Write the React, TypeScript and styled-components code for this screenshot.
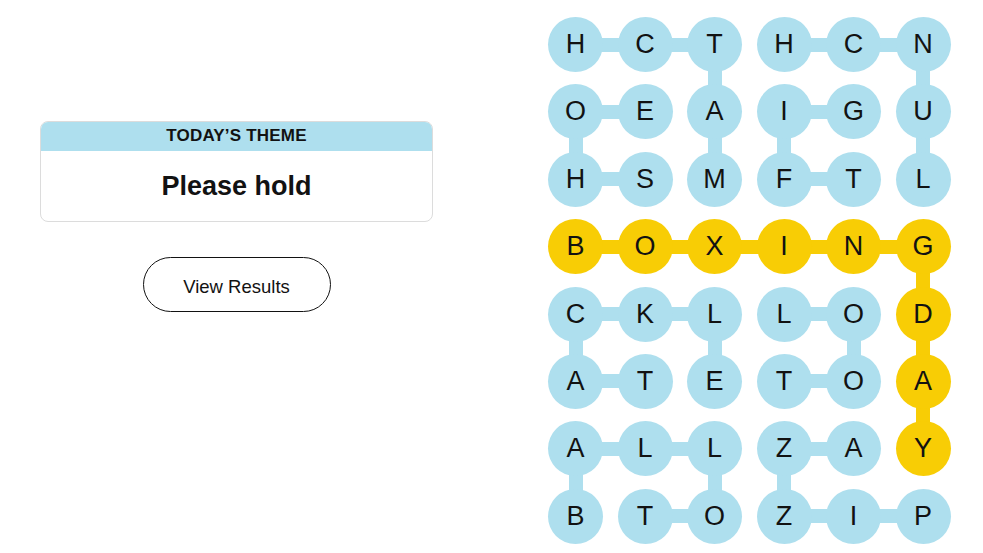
import React from "react";
import styled, { createGlobalStyle } from "styled-components";

const GlobalStyle = createGlobalStyle`
  html, body {
    margin: 0;
    padding: 0;
    background: #ffffff;
    font-family: "Liberation Sans", Arial, sans-serif;
    color: #000;
  }
`;

const BLUE = "#aedfee";
const YELLOW = "#f8cd05";
const CELL = 55;
const COL_GAP = 14.5;
const ROW_GAP = 12.4;

const Page = styled.div`
  display: flex;
  align-items: flex-start;
  width: 983px;
  height: 553px;
  overflow: hidden;
`;

const Side = styled.div`
  display: flex;
  flex-direction: column;
  align-items: center;
  width: 393px;
  padding: 121px 0 0 40px;
`;

const ThemeCard = styled.section`
  width: 100%;
  box-sizing: border-box;
  border: 1px solid #dcdcdc;
  border-radius: 8px;
  overflow: hidden;
  background: #fff;
`;

const ThemeHeader = styled.div`
  height: 30px;
  background: ${BLUE};
  display: flex;
  align-items: center;
  justify-content: center;
  font-weight: 700;
  font-size: 17px;
  letter-spacing: 0.2px;
  color: #121212;
  margin: -1px -1px 0;
`;

const ThemeBody = styled.div`
  height: 70px;
  display: flex;
  align-items: center;
  justify-content: center;
  font-weight: 700;
  font-size: 27px;
  color: #121212;
`;

const ResultsButton = styled.button`
  margin-top: 35px;
  width: 188px;
  height: 55px;
  padding: 4px 0 0;
  border: 1px solid #121212;
  border-radius: 28px;
  background: #fff;
  font-family: "Liberation Sans", Arial, sans-serif;
  font-size: 18.5px;
  color: #121212;
  cursor: pointer;
`;

const Board = styled.div`
  margin-left: 115px;
  padding-top: 17px;
  display: grid;
  grid-template-columns: repeat(6, ${CELL}px);
  grid-auto-rows: ${CELL}px;
  column-gap: ${COL_GAP}px;
  row-gap: ${ROW_GAP}px;
`;

const Cell = styled.div`
  position: relative;
  width: ${CELL}px;
  height: ${CELL}px;
`;

const Circle = styled.div<{ $color: string }>`
  position: relative;
  z-index: 2;
  width: 100%;
  height: 100%;
  border-radius: 50%;
  background: ${(p) => p.$color};
  display: flex;
  align-items: center;
  justify-content: center;
  font-size: 27px;
  font-weight: 400;
  color: #121212;
  line-height: 1;
`;

const Link = styled.span<{ $dir: "right" | "down"; $color: string }>`
  position: absolute;
  z-index: 1;
  background: ${(p) => p.$color};
  ${(p) =>
    p.$dir === "right"
      ? `left: 50%; top: calc(50% - 7px); height: 14px; width: ${CELL + COL_GAP}px;`
      : `top: 50%; left: calc(50% - 7px); width: 14px; height: ${CELL + ROW_GAP}px;`}
`;

const letters = [
  "HCTHCN",
  "OEAIGU",
  "HSMFTL",
  "BOXING",
  "CKLLOD",
  "ATETOA",
  "ALLZAY",
  "BTOZIP",
];

const rightLinks = new Set([
  "0,0", "0,1", "0,3", "0,4",
  "1,0", "1,3",
  "2,0", "2,3",
  "3,0", "3,1", "3,2", "3,3", "3,4",
  "4,0", "4,1", "4,3",
  "5,0", "5,3",
  "6,0", "6,1", "6,3",
  "7,1", "7,3", "7,4",
]);
const downLinks = new Set([
  "0,2", "0,5",
  "1,0", "1,2", "1,3", "1,5",
  "3,5", "4,5", "5,5",
  "4,0", "4,2", "4,4",
  "6,0", "6,2", "6,3",
]);

const isYellow = (r: number, c: number) =>
  r === 3 || (c === 5 && r >= 3 && r <= 6);

export default function App() {
  return (
    <>
      <GlobalStyle />
      <Page>
        <Side>
          <ThemeCard>
            <ThemeHeader>TODAY’S THEME</ThemeHeader>
            <ThemeBody>Please hold</ThemeBody>
          </ThemeCard>
          <ResultsButton>View Results</ResultsButton>
        </Side>
        <Board>
          {letters.map((row, r) =>
            row.split("").map((ch, c) => {
              const key = `${r},${c}`;
              const col = isYellow(r, c) ? YELLOW : BLUE;
              return (
                <Cell key={key}>
                  {rightLinks.has(key) && <Link $dir="right" $color={col} />}
                  {downLinks.has(key) && <Link $dir="down" $color={col} />}
                  <Circle $color={col}>{ch}</Circle>
                </Cell>
              );
            })
          )}
        </Board>
      </Page>
    </>
  );
}
